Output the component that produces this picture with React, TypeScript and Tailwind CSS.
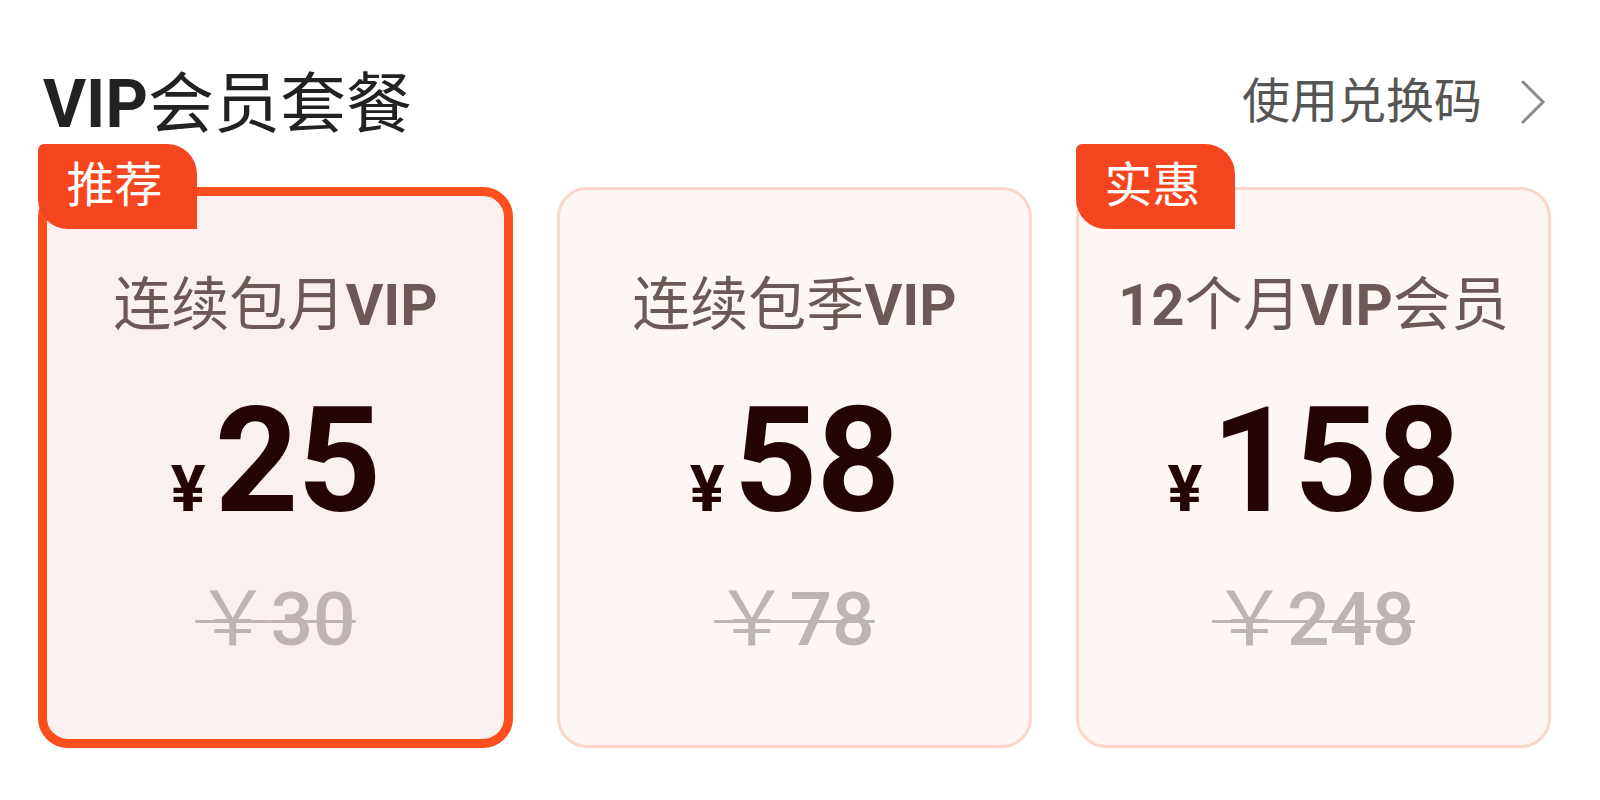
import React from "react";

const FONT = { fontFamily: 'Roboto, "Noto Sans CJK SC", sans-serif' };

type Plan = {
  title: React.ReactNode;
  price: string;
  old: string;
  badge?: string;
  selected?: boolean;
};

const plans: Plan[] = [
  {
    title: (
      <>
        连续包月<span className="font-bold">VIP</span>
      </>
    ),
    price: "25",
    old: "30",
    badge: "推荐",
    selected: true,
  },
  {
    title: (
      <>
        连续包季<span className="font-bold">VIP</span>
      </>
    ),
    price: "58",
    old: "78",
  },
  {
    title: (
      <>
        <span className="font-bold">12</span>个月<span className="font-bold">VIP</span>会员
      </>
    ),
    price: "158",
    old: "248",
    badge: "实惠",
  },
];

function Card({ plan }: { plan: Plan }) {
  return (
    <div className="relative w-[475px]">
      {plan.badge && (
        <div className="absolute left-0 top-[-43px] z-10 flex h-[85px] w-[159px] items-center justify-center rounded-tl-[6px] rounded-tr-[30px] rounded-bl-[30px] rounded-br-none bg-[#f5461f] pr-[6px] pb-[2px] text-[48px] leading-[48px] text-white">
          {plan.badge}
        </div>
      )}
      <div
        className={
          plan.selected
            ? "flex h-[561px] flex-col items-center rounded-[30px] border-[9px] border-[#fd4f1b] bg-[#fbf0f0] pt-[80px]"
            : "flex h-[561px] flex-col items-center rounded-[30px] border-[3px] border-[#fdd6cb] bg-[#fef6f5] pt-[86px]"
        }
      >
        <div className="h-[58px] whitespace-nowrap text-[58px] leading-[58px] text-[#6d5757]">
          {plan.title}
        </div>
        <div className="mt-[55px] flex h-[146px] items-baseline text-[#240404]">
          <span className="mr-[9px] text-[65px] font-bold leading-[146px]">¥</span>
          <span className="text-[146px] font-bold leading-[146px] tracking-[-1px]">
            {plan.price}
          </span>
        </div>
        <div className="mt-[47px] h-[75px] whitespace-nowrap text-[75px] font-medium leading-[75px] text-[#bfb3b3] line-through decoration-[3px]">
          <span className="font-normal">￥</span>
          {plan.old}
        </div>
      </div>
    </div>
  );
}

export default function App() {
  return (
    <div className="h-[800px] w-[1600px] bg-white" style={FONT}>
      <div className="ml-[38px] w-[1513px] pt-[73px]">
        <div className="flex h-[64px] items-center justify-between pl-[5px] pr-[5px]">
          <div className="whitespace-nowrap text-[66px] leading-[64px] text-[#222222]">
            <span className="font-bold">VIP</span>会员套餐
          </div>
          <div className="flex items-center">
            <span className="mb-[6px] whitespace-nowrap text-[48px] leading-[48px] text-[#555555]">
              使用兑换码
            </span>
            <svg
              className="mb-[6px] ml-[38px]"
              width="26"
              height="46"
              viewBox="0 0 26 46"
              fill="none"
            >
              <path
                d="M3 3 L23 23 L3 43"
                stroke="#8a8a8a"
                strokeWidth="3"
                strokeLinecap="round"
                strokeLinejoin="miter"
              />
            </svg>
          </div>
        </div>
        <div className="mt-[50px] flex gap-[44px]">
          {plans.map((p, i) => (
            <Card key={i} plan={p} />
          ))}
        </div>
      </div>
    </div>
  );
}
